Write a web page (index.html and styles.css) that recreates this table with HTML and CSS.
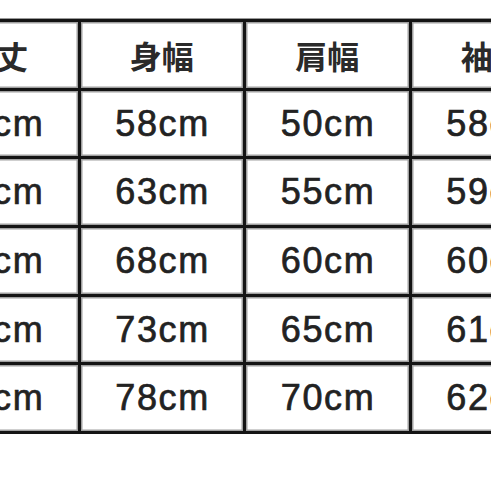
FILE: index.html
```html
<!DOCTYPE html>
<html lang="ja">
<head>
<meta charset="utf-8">
<link rel="stylesheet" href="styles.css">
</head>
<body>
<div class="sheet">
  <div class="grid">
    <div class="cell head">着丈</div>
    <div class="cell head">身幅</div>
    <div class="cell head">肩幅</div>
    <div class="cell head">袖丈</div>

    <div class="cell num">66cm</div>
    <div class="cell num">58cm</div>
    <div class="cell num">50cm</div>
    <div class="cell num">58cm</div>

    <div class="cell num">68cm</div>
    <div class="cell num">63cm</div>
    <div class="cell num">55cm</div>
    <div class="cell num">59cm</div>

    <div class="cell num">70cm</div>
    <div class="cell num">68cm</div>
    <div class="cell num">60cm</div>
    <div class="cell num">60cm</div>

    <div class="cell num">72cm</div>
    <div class="cell num">73cm</div>
    <div class="cell num">65cm</div>
    <div class="cell num">61cm</div>

    <div class="cell num">74cm</div>
    <div class="cell num">78cm</div>
    <div class="cell num">70cm</div>
    <div class="cell num">62cm</div>
  </div>
</div>
</body>
</html>
```
FILE: styles.css
```css
html, body {
  margin: 0;
  padding: 0;
  background: #ffffff;
  width: 491px;
  height: 491px;
  overflow: hidden;
}

.sheet {
  padding-top: 19px;
}

.grid {
  margin-left: -88px;
  width: max-content;
  display: grid;
  grid-template-columns: repeat(4, 162.5px);
  grid-auto-rows: 65.7px;
  gap: 3px;
  padding: 3px;
  background: #141414;
  box-shadow: 0 -1px 0 0 #9a9a9a;
}

.cell {
  background: #ffffff;
  box-shadow: inset 0 0 0 1.5px #a0a0a0;
  display: flex;
  align-items: center;
  justify-content: center;
  color: #222222;
}

.head {
  font-family: "Noto Sans CJK JP", "Noto Sans", sans-serif;
  font-size: 32px;
  font-weight: 700;
  color: #2a2a2a;
}

.num {
  font-family: "Liberation Sans", Arial, sans-serif;
  font-size: 36px;
  letter-spacing: 1.6px;
  padding-left: 1.6px;
  -webkit-text-stroke: 0.7px #222222;
}
```
